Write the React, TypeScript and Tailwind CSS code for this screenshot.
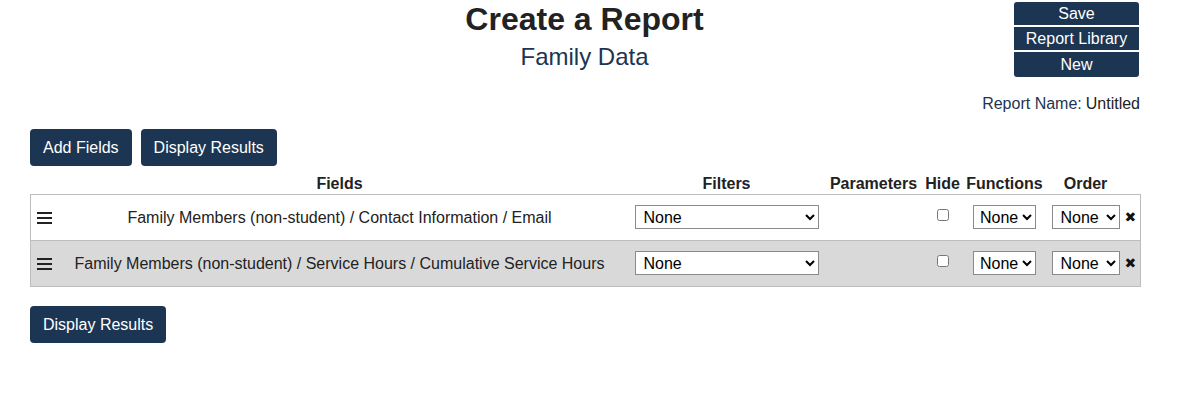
import React from "react";

const rows = [
  "Family Members (non-student) / Contact Information / Email",
  "Family Members (non-student) / Service Hours / Cumulative Service Hours",
];

function Handle() {
  return (
    <div className="flex flex-col gap-[3px] w-[15px]">
      <span className="block h-[2px] bg-[#222]" />
      <span className="block h-[2px] bg-[#222]" />
      <span className="block h-[2px] bg-[#222]" />
    </div>
  );
}

function Sel({ w, pad = "pl-[4px]" }: { w: string; pad?: string }) {
  return (
    <select
      className={`${w} ${pad} h-[24px] border border-[#8a8a8a] bg-white text-[16px] text-black`}
      defaultValue="None"
    >
      <option>None</option>
    </select>
  );
}

export default function App() {
  return (
    <div className="w-[1183px] h-[396px] bg-white font-['Liberation_Sans',Arial,sans-serif] text-[#222]">
      <div className="relative">
        <div className="text-center pt-[1px] pr-[14px]">
          <h1 className="text-[32px] leading-[36px] font-bold text-[#222]">Create a Report</h1>
          <p className="text-[24px] leading-[26px] mt-[7px] text-[#1c3552]">Family Data</p>
        </div>

        <div className="absolute right-[44px] top-[2px] w-[125px] flex flex-col gap-[2px]">
          <button className="h-[23px] bg-[#1c3552] text-white text-[16px] rounded-t-[3px]">Save</button>
          <button className="h-[23px] bg-[#1c3552] text-white text-[16px]">Report Library</button>
          <button className="h-[25px] bg-[#1c3552] text-white text-[16px] rounded-b-[3px]">New</button>
        </div>
      </div>

      <div className="flex justify-end pr-[43px] mt-[25px] text-[16px] leading-[18px]">
        <span className="text-[#1c3552]">Report Name:</span>
        <span className="ml-[4px] text-[#222]">Untitled</span>
      </div>

      <div className="px-[30px] mt-[16px] flex gap-[9px]">
        <button className="h-[37px] px-[13px] bg-[#1c3552] text-white text-[16px] rounded-[4px]">Add Fields</button>
        <button className="h-[37px] px-[13px] bg-[#1c3552] text-white text-[16px] rounded-[4px]">Display Results</button>
      </div>

      <div className="px-[30px] mt-[8px]">
        <table className="w-[1110px] border-collapse table-fixed text-[16px]">
          <colgroup>
            <col className="w-[20px]" />
            <col className="w-[578px]" />
            <col className="w-[196px]" />
            <col className="w-[98px]" />
            <col className="w-[40px]" />
            <col className="w-[84px]" />
            <col className="w-[78px]" />
            <col className="w-[16px]" />
          </colgroup>
          <thead>
            <tr className="h-[20px] text-[16px] leading-[20px] font-bold">
              <th />
              <th className="text-center">Fields</th>
              <th className="text-center">Filters</th>
              <th className="text-center">Parameters</th>
              <th className="text-center">Hide</th>
              <th className="text-center">Functions</th>
              <th className="text-center">Order</th>
              <th />
            </tr>
          </thead>
          <tbody>
            {rows.map((r, i) => (
              <tr
                key={r}
                className={`h-[46px] border border-[#bdbdbd] ${i % 2 === 1 ? "bg-[#d9d9d9]" : "bg-white"}`}
              >
                <td className="pl-[6px]">
                  <Handle />
                </td>
                <td className="text-center">{r}</td>
                <td className="text-center">
                  <Sel w="w-[184px]" />
                </td>
                <td />
                <td className="text-center">
                  <input type="checkbox" className="w-[12px] h-[12px] align-middle -mt-[6px]" />
                </td>
                <td className="text-center">
                  <Sel w="w-[63px]" pad="pl-[2px]" />
                </td>
                <td className="text-center">
                  <Sel w="w-[68px]" />
                </td>
                <td className="text-left text-[14px] font-['DejaVu_Sans',sans-serif] text-[#111]">✖</td>
              </tr>
            ))}
          </tbody>
        </table>
      </div>

      <div className="px-[30px] mt-[19px]">
        <button className="h-[37px] px-[13px] bg-[#1c3552] text-white text-[16px] rounded-[4px]">Display Results</button>
      </div>
    </div>
  );
}
